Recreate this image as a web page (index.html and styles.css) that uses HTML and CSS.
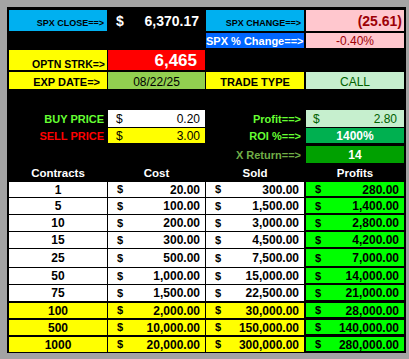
FILE: index.html
```html
<!DOCTYPE html>
<html>
<head>
<meta charset="utf-8">
<link rel="stylesheet" href="styles.css">
</head>
<body>
<div class="sheet">
  <div class="row ra">
    <div class="cell lbl-sm sky">SPX CLOSE==&gt;</div>
    <div class="cell money spx"><span>$</span><span>6,370.17</span></div>
    <div class="cell lbl-sm sky">SPX CHANGE==&gt;</div>
    <div class="cell pink chg">(25.61)</div>
  </div>
  <div class="row rb">
    <div class="cell"></div>
    <div class="cell"></div>
    <div class="cell blue pct-lbl">SPX % Change==&gt;</div>
    <div class="cell pink pct center">-0.40%</div>
  </div>
  <div class="row rc">
    <div class="cell yellow lbl strk">OPTN STRK=&gt;</div>
    <div class="cell red strike">6,465</div>
    <div class="cell"></div>
    <div class="cell"></div>
  </div>
  <div class="row rd">
    <div class="cell yellow lbl exp">EXP DATE=&gt;</div>
    <div class="cell date center">08/22/25</div>
    <div class="cell yellow lbl center">TRADE TYPE</div>
    <div class="cell mint call center">CALL</div>
  </div>
  <div class="row re">
    <div class="cell lbl lime">BUY PRICE</div>
    <div class="cell money plain white"><span>$</span><span>0.20</span></div>
    <div class="cell lbl lime">Profit==&gt;</div>
    <div class="cell money plain mint profit"><span>$</span><span>2.80</span></div>
  </div>
  <div class="row rf">
    <div class="cell lbl redtext">SELL PRICE</div>
    <div class="cell money plain yellow"><span>$</span><span>3.00</span></div>
    <div class="cell lbl lime">ROI %==&gt;</div>
    <div class="cell roi center strong">1400%</div>
  </div>
  <div class="row rg">
    <div class="cell"></div>
    <div class="cell"></div>
    <div class="cell lbl olive">X Return==&gt;</div>
    <div class="cell xret center strong">14</div>
  </div>
  <div class="row head">
    <div class="cell center">Contracts</div>
    <div class="cell center">Cost</div>
    <div class="cell center">Sold</div>
    <div class="cell center">Profits</div>
  </div>

  <div class="table">
    <div class="row tr h15">
      <div class="cell center">1</div>
      <div class="cell money"><span class="d">$</span><span>20.00</span></div>
      <div class="cell money"><span class="d">$</span><span>300.00</span></div>
      <div class="cell money g"><span class="d">$</span><span>280.00</span></div>
    </div>
    <div class="row tr">
      <div class="cell center">5</div>
      <div class="cell money"><span class="d">$</span><span>100.00</span></div>
      <div class="cell money"><span class="d">$</span><span>1,500.00</span></div>
      <div class="cell money g"><span class="d">$</span><span>1,400.00</span></div>
    </div>
    <div class="row tr">
      <div class="cell center">10</div>
      <div class="cell money"><span class="d">$</span><span>200.00</span></div>
      <div class="cell money"><span class="d">$</span><span>3,000.00</span></div>
      <div class="cell money g"><span class="d">$</span><span>2,800.00</span></div>
    </div>
    <div class="row tr">
      <div class="cell center">15</div>
      <div class="cell money"><span class="d">$</span><span>300.00</span></div>
      <div class="cell money"><span class="d">$</span><span>4,500.00</span></div>
      <div class="cell money g"><span class="d">$</span><span>4,200.00</span></div>
    </div>
    <div class="row tr h18">
      <div class="cell center">25</div>
      <div class="cell money"><span class="d">$</span><span>500.00</span></div>
      <div class="cell money"><span class="d">$</span><span>7,500.00</span></div>
      <div class="cell money g"><span class="d">$</span><span>7,000.00</span></div>
    </div>
    <div class="row tr">
      <div class="cell center">50</div>
      <div class="cell money"><span class="d">$</span><span>1,000.00</span></div>
      <div class="cell money"><span class="d">$</span><span>15,000.00</span></div>
      <div class="cell money g"><span class="d">$</span><span>14,000.00</span></div>
    </div>
    <div class="row tr">
      <div class="cell center">75</div>
      <div class="cell money"><span class="d">$</span><span>1,500.00</span></div>
      <div class="cell money"><span class="d">$</span><span>22,500.00</span></div>
      <div class="cell money g"><span class="d">$</span><span>21,000.00</span></div>
    </div>
    <div class="row tr hi h15">
      <div class="cell center">100</div>
      <div class="cell money"><span class="d">$</span><span>2,000.00</span></div>
      <div class="cell money"><span class="d">$</span><span>30,000.00</span></div>
      <div class="cell money g"><span class="d">$</span><span>28,000.00</span></div>
    </div>
    <div class="row tr hi h15">
      <div class="cell center">500</div>
      <div class="cell money"><span class="d">$</span><span>10,000.00</span></div>
      <div class="cell money"><span class="d">$</span><span>150,000.00</span></div>
      <div class="cell money g"><span class="d">$</span><span>140,000.00</span></div>
    </div>
    <div class="row tr hi h15">
      <div class="cell center">1000</div>
      <div class="cell money"><span class="d">$</span><span>20,000.00</span></div>
      <div class="cell money"><span class="d">$</span><span>300,000.00</span></div>
      <div class="cell money g"><span class="d">$</span><span>280,000.00</span></div>
    </div>
  </div>
</div>
</body>
</html>
```

FILE: styles.css
```css
html, body {
  margin: 0;
  padding: 0;
  background: #a3a3a3;
}
body {
  font-family: "Liberation Sans", Arial, sans-serif;
  width: 409px;
  height: 359px;
  overflow: hidden;
}
.sheet {
  margin: 7px 0 0 7px;
  width: 395px;
  height: 343px;
  padding: 3px 2px 0 2px;
  background: #000;
  display: flex;
  flex-direction: column;
}
.row {
  display: grid;
  grid-template-columns: 98px 97px 98px 99px;
  column-gap: 1px;
}
.row > .cell:nth-child(4) {
  margin-left: 1px;
}
.cell {
  display: flex;
  align-items: flex-end;
  justify-content: flex-end;
  line-height: 1;
  white-space: nowrap;
  overflow: hidden;
  min-width: 0;
}
.center { justify-content: center; }

/* rows of the top block */
.ra { height: 21px; }
.rb { height: 15px; margin-top: 2px; }
.rc { height: 20px; margin-top: 2px; }
.rd { height: 17px; margin-top: 2px; }
.re { height: 17px; margin-top: 21px; }
.rf { height: 15px; margin-top: 1px; }
.rg { height: 17px; margin-top: 3px; }
.head { height: 18px; }

.ra .cell { padding-bottom: 3px; }
.rb .cell, .rc .cell, .rd .cell, .rf .cell { padding-bottom: 1px; }
.re .cell, .rg .cell, .head .cell { padding-bottom: 2px; }

/* colours */
.sky { background: #00b0f0; }
.blue { background: #0066ff; }
.pink { background: #ffc7ce; color: #9c0006; }
.yellow { background: #ffff00; }
.red { background: #ff0000; }
.date { background: #92d050; }
.mint { background: #c6efce; color: #006100; }
.white { background: #fff; }
.roi { background: #00b050; color: #fff; }
.xret { background: #00a000; color: #fff; }

/* labels */
.lbl-sm {
  font-size: 9px;
  font-weight: 700;
  color: #000;
  padding-right: 3px;
}
.lbl {
  font-size: 11px;
  font-weight: 700;
  padding-right: 3px;
}
.lbl.center { padding-right: 0; }
.strk { font-size: 10.5px; padding-right: 2px; }
.exp { padding-right: 7px; }
.lime { color: #66ff33; }
.redtext { color: #ff0000; }
.olive { color: #70ad47; }

.money {
  justify-content: space-between;
  padding-left: 8px;
  padding-right: 5px;
}
.spx {
  color: #fff;
  font-size: 14px;
  font-weight: 700;
  padding-right: 6px;
}
.chg {
  font-size: 14px;
  font-weight: 700;
  padding-right: 2px;
}
.pct-lbl {
  justify-content: flex-start;
  color: #fff;
  font-size: 11px;
  font-weight: 700;
}
.pct { font-size: 12px; }
.strike {
  color: #fff;
  font-size: 17px;
  font-weight: 700;
  padding-right: 8px;
  padding-bottom: 2px;
}
.date, .call { font-size: 12px; }
.plain { font-size: 12px; }
.profit { padding-left: 7px; padding-right: 7px; }
.strong { font-size: 12px; font-weight: 700; }

.head .cell {
  color: #fff;
  font-size: 11.5px;
  font-weight: 700;
}

/* table */
.table {
  display: flex;
  flex-direction: column;
  gap: 1px;
  margin-top: 1px;
}
.tr { height: 16px; }
.tr.h15 { height: 15px; }
.tr.h18 { height: 18px; }
.tr.hi { margin-top: 1px; }
.tr .cell {
  background: #fff;
  align-items: center;
  font-size: 12px;
  font-weight: 700;
  color: #000;
}
.tr.hi .cell { background: #ffff00; }
.tr .cell.g { background: #00ff00; box-shadow: inset 0 -1px 0 #000; }
.tr .money { padding-left: 9px; padding-right: 5px; }
.tr .d { font-size: 11px; }
```
